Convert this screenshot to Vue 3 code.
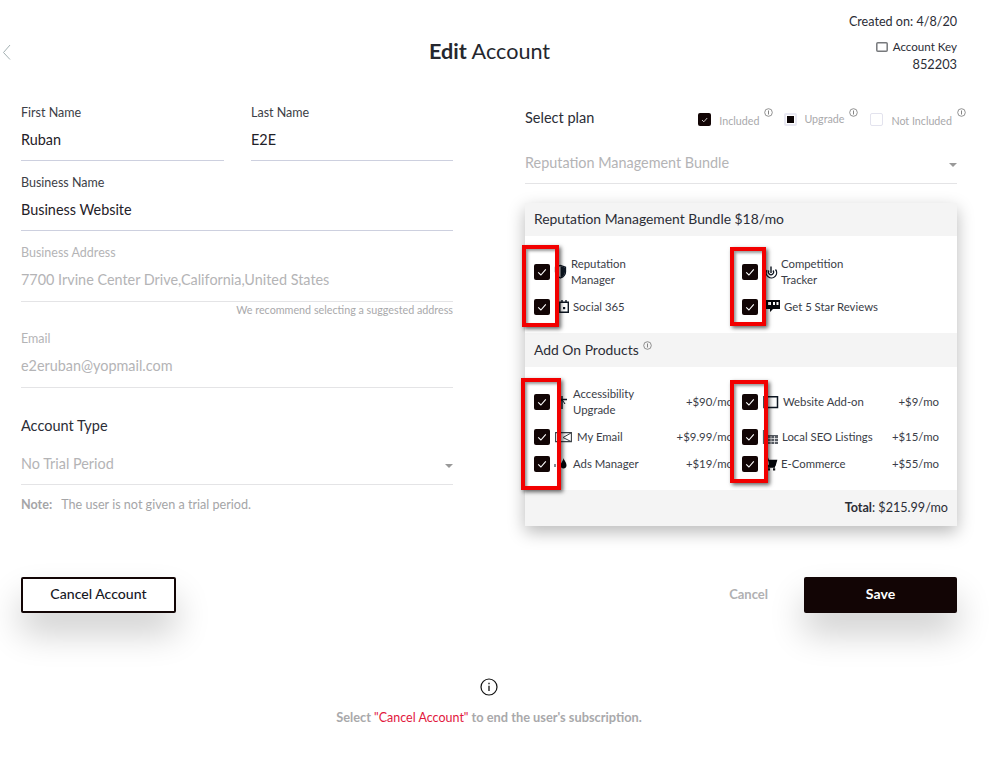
<script setup>
const dark = '#0d1622'
const grey = '#5a5f66'
const planItems = [
  { lines: ['Reputation', 'Manager'], w: 21, shapes: [
    { d: 'M5.5 5.2 10.5 3.5 15.5 5.2V10C15.5 13 13 15 10.5 16 8 15 5.5 13 5.5 10Z', stroke: dark, sw: 1.3 },
    { d: 'M10.5 4V15.5C13 14.5 15 12.8 15 10V5.5Z', fill: dark }
  ] },
  { lines: ['Competition', 'Tracker'], w: 23, shapes: [
    { d: 'M9 8A5.2 5.2 0 1 0 17.5 7.5', stroke: dark, sw: 1.3 },
    { d: 'M11 8.5A2.6 2.6 0 1 0 15 8.5', stroke: dark, sw: 1.2 },
    { d: 'M13 4.5V11', stroke: dark, sw: 1.4 }
  ] },
  { lines: ['Social 365'], w: 23, shapes: [
    { d: 'M9.8 5.2H18.3V15.3H9.8Z', stroke: dark, sw: 1.4 },
    { d: 'M12 3V6M16 3V6', stroke: dark, sw: 1.4 },
    { d: 'M13 10H15.2V12.2H13Z', fill: dark }
  ] },
  { lines: ['Get 5 Star Reviews'], w: 26, shapes: [
    { d: 'M8 3H22V12H15L12 15V12H8Z', fill: '#05070c' },
    { d: 'M10 5H13V8H10ZM15 5H17V8H15ZM18.5 5H20.5V8H18.5Z', fill: '#fff' }
  ] }
]
const addItems = [
  { lines: ['Accessibility', 'Upgrade'], price: '+$90/mo', w: 23, shapes: [
    { d: 'M12 4V17M7 7.5H17', stroke: dark, sw: 1.4 },
    { d: 'M12 7.5 9 12M12 7.5 15 12', stroke: dark, sw: 1 }
  ] },
  { lines: ['Website Add-on'], price: '+$9/mo', w: 25, shapes: [
    { d: 'M6 4.7H19.5V15.5H6Z', stroke: dark, sw: 1.5 }
  ] },
  { lines: ['My Email'], price: '+$9.99/mo', w: 27, shapes: [
    { d: 'M5.6 5.6H21.4V14.6H5.6Z', stroke: '#3a3f45', sw: 1.1 },
    { d: 'M21 6 13 10.5 21 14.5', stroke: '#3a3f45', sw: 1 }
  ] },
  { lines: ['Local SEO Listings'], price: '+$15/mo', w: 24, shapes: [
    { d: 'M5.5 3V17', stroke: grey, sw: 1.2 },
    { d: 'M10 8H20V17H10Z', fill: grey },
    { d: 'M13 9V17M16.5 9V17M10 11.5H20M10 14.5H20', stroke: '#fff', sw: 0.7 }
  ] },
  { lines: ['Ads Manager'], price: '+$19/mo', w: 23, shapes: [
    { d: 'M13.5 4C14 6.5 16.5 8 16.5 11.5 16.5 13.5 15 14.5 13.5 14.5 12 14.5 10.5 13.5 10.5 11.5 10.5 9 13 7.5 13.5 4Z', fill: '#05070c' },
    { d: 'M5 10V13M7.5 9V14', stroke: dark, sw: 1 }
  ] },
  { lines: ['E-Commerce'], price: '+$55/mo', w: 23, shapes: [
    { d: 'M7 4H9.5L10.5 6.5H18.5L17 11.5H10.5L9.5 13H17', stroke: '#05070c', sw: 1.3 },
    { d: 'M10.5 6.5H18.5L17 11.5H11Z', fill: '#05070c' },
    { d: 'M9.8 14.2H12V16.4H9.8ZM15 14.2H17.2V16.4H15Z', fill: '#05070c' }
  ] }
]
</script>

<template>
  <div class="page">
    <header class="top">
      <div class="back">
        <svg width="10" height="18" viewBox="0 0 10 18"><path d="M8 2 1.5 9.5 8 16.5" fill="none" stroke="#a3b0b2" stroke-width="1" /></svg>
      </div>
      <h1 class="title"><b>Edit</b> Account</h1>
      <div class="meta">
        <div class="created">Created on: 4/8/20</div>
        <div class="key">
          <svg width="12" height="10" viewBox="0 0 12 10"><rect x="0.8" y="0.8" width="10.4" height="8.4" rx="1" fill="none" stroke="#77797c" stroke-width="1.5" /></svg>
          <span>Account Key</span>
        </div>
        <div class="keynum">852203</div>
      </div>
    </header>

    <main class="columns">
      <section class="left">
        <div class="names">
          <div class="field">
            <label>First Name</label>
            <div class="value">Ruban</div>
          </div>
          <div class="field">
            <label>Last Name</label>
            <div class="value">E2E</div>
          </div>
        </div>
        <div class="field">
          <label>Business Name</label>
          <div class="value">Business Website</div>
        </div>
        <div class="field off address">
          <label>Business Address</label>
          <div class="value">7700 Irvine Center Drive,California,United States</div>
        </div>
        <div class="hint">We recommend selecting a suggested address</div>
        <div class="field off email">
          <label>Email</label>
          <div class="value">e2eruban@yopmail.com</div>
        </div>
        <div class="type-title">Account Type</div>
        <div class="select type-select">
          <span>No Trial Period</span>
          <i class="caret"></i>
        </div>
        <div class="note"><b>Note:</b><span>The user is not given a trial period.</span></div>
      </section>

      <section class="right">
        <div class="plan-row">
          <div class="plan-label">Select plan</div>
          <div class="legend">
            <div class="lg lg-inc">
              <span class="box small">
                <svg width="13" height="13" viewBox="0 0 13 13"><path d="M4 7 5.8 8.8 9.2 5" fill="none" stroke="#ddd" stroke-width="0.9" /></svg>
              </span>
              <span class="lg-text">Included</span>
              <svg class="inf" width="9" height="9" viewBox="0 0 9 9"><circle cx="4.5" cy="4.5" r="3.8" fill="none" stroke="#777" stroke-width="0.8" /><path d="M4.5 2.5V6.5" stroke="#777" stroke-width="0.9" /></svg>
            </div>
            <div class="lg lg-up">
              <span class="box-up"><i></i></span>
              <span class="lg-text">Upgrade</span>
              <svg class="inf" width="9" height="9" viewBox="0 0 9 9"><circle cx="4.5" cy="4.5" r="3.8" fill="none" stroke="#777" stroke-width="0.8" /><path d="M4.5 2.5V6.5" stroke="#777" stroke-width="0.9" /></svg>
            </div>
            <div class="lg lg-no">
              <span class="box-no"></span>
              <span class="lg-text">Not Included</span>
              <svg class="inf" width="9" height="9" viewBox="0 0 9 9"><circle cx="4.5" cy="4.5" r="3.8" fill="none" stroke="#777" stroke-width="0.8" /><path d="M4.5 2.5V6.5" stroke="#777" stroke-width="0.9" /></svg>
            </div>
          </div>
        </div>
        <div class="select plan-select">
          <span>Reputation Management Bundle</span>
          <i class="caret"></i>
        </div>

        <div class="card">
          <div class="card-head">Reputation Management Bundle $18/mo</div>
          <div class="grid">
            <div v-for="item in planItems" :key="item.lines[0]" class="row">
              <span class="box">
                <svg width="16" height="16" viewBox="0 0 16 16"><path d="M4.2 8.4 6.9 11 11.8 5.4" fill="none" stroke="#fff" stroke-width="1.1" /></svg>
              </span>
              <svg class="ic" :width="item.w" height="20" :viewBox="`0 0 ${item.w} 20`">
                <path v-for="s in item.shapes" :key="s.d" :d="s.d" :fill="s.fill || 'none'" :stroke="s.stroke || 'none'" :stroke-width="s.sw || 0" />
              </svg>
              <div class="name"><div v-for="l in item.lines" :key="l">{{ l }}</div></div>
            </div>
          </div>
          <div class="card-head addon">
            <span>Add On Products</span>
            <svg width="9" height="9" viewBox="0 0 9 9"><circle cx="4.5" cy="4.5" r="3.8" fill="none" stroke="#777" stroke-width="0.8" /><path d="M4.5 2.5V6.5" stroke="#777" stroke-width="0.9" /></svg>
          </div>
          <div class="grid">
            <div v-for="item in addItems" :key="item.lines[0]" class="row">
              <span class="box">
                <svg width="16" height="16" viewBox="0 0 16 16"><path d="M4.2 8.4 6.9 11 11.8 5.4" fill="none" stroke="#fff" stroke-width="1.1" /></svg>
              </span>
              <svg class="ic" :width="item.w" height="20" :viewBox="`0 0 ${item.w} 20`">
                <path v-for="s in item.shapes" :key="s.d" :d="s.d" :fill="s.fill || 'none'" :stroke="s.stroke || 'none'" :stroke-width="s.sw || 0" />
              </svg>
              <div class="name"><div v-for="l in item.lines" :key="l">{{ l }}</div></div>
              <div class="price">{{ item.price }}</div>
            </div>
          </div>
          <div class="card-total"><b>Total</b>: $215.99/mo</div>

          <i class="frame f1"></i>
          <i class="frame f2"></i>
          <i class="frame f3"></i>
          <i class="frame f4"></i>
        </div>
      </section>
    </main>

    <div class="actions">
      <button class="btn outline">Cancel Account</button>
      <div class="actions-right">
        <span class="link">Cancel</span>
        <button class="btn solid">Save</button>
      </div>
    </div>

    <footer class="foot">
      <svg width="18" height="18" viewBox="0 0 18 18"><circle cx="9" cy="9" r="8" fill="none" stroke="#111" stroke-width="1.2" /><path d="M9 7.8V13" stroke="#111" stroke-width="1.3" /><path d="M9 4.8V6.2" stroke="#111" stroke-width="1.3" /></svg>
      <p>Select <span>"Cancel Account"</span> to end the user's subscription.</p>
    </footer>
  </div>
</template>

<style>
html, body { margin: 0; background: #fff; }
</style>

<style scoped>
.page {
  width: 1005px;
  font-family: Lato, "Open Sans", sans-serif;
  color: #2b2d36;
  box-sizing: border-box;
}
.top {
  height: 104px;
  display: grid;
  grid-template-columns: 427px auto 1fr;
  padding: 0 48px 0 2px;
  box-sizing: border-box;
}
.back { padding-top: 43px; }
.back svg { display: block; }
.title {
  margin: 36px 0 0;
  font-size: 21.6px;
  line-height: 30px;
  font-weight: 400;
  color: #25272e;
}
.title b { font-weight: 700; }
.meta { text-align: right; padding-top: 14px; }
.created { font-size: 12.6px; line-height: 16px; }
.key {
  margin-top: 9px;
  font-size: 11.6px;
  line-height: 16px;
  display: flex;
  justify-content: flex-end;
  align-items: center;
  gap: 5px;
}
.keynum { font-size: 12.8px; line-height: 18px; }

.columns {
  display: grid;
  grid-template-columns: 432px 432px;
  column-gap: 72px;
  padding-left: 21px;
}
.left { padding-top: 1px; }
.names {
  display: grid;
  grid-template-columns: 203px 202px;
  column-gap: 27px;
}
.field { margin-bottom: 14px; border-bottom: 1px solid #cdd0df; padding-bottom: 10px; }
.field label {
  display: block;
  font-size: 12.5px;
  line-height: 16px;
  margin-bottom: 9px;
  color: #3c3e46;
}
.value { font-size: 14.4px; line-height: 20px; color: #1f2128; }
.off { border-bottom-color: #e4e4e6; }
.off label, .off .value { color: #b4b4b6; }
.address { padding-bottom: 11px; margin-bottom: 0; }
.hint {
  font-size: 10.75px;
  line-height: 16px;
  text-align: right;
  color: #a9a9ab;
  margin-bottom: 13px;
}
.email { margin-bottom: 0; padding-bottom: 11px; }
.type-title {
  margin-top: 28px;
  font-size: 14.5px;
  line-height: 20px;
}
.select {
  display: flex;
  justify-content: space-between;
  align-items: center;
  font-size: 14.4px;
  line-height: 20px;
  color: #b4b4b6;
  padding-bottom: 10px;
  border-bottom: 1px solid #e4e4e6;
}
.type-select { margin-top: 18px; }
.caret {
  width: 0;
  height: 0;
  border-left: 4.5px solid transparent;
  border-right: 4.5px solid transparent;
  border-top: 4.5px solid #999;
  margin-top: 3px;
}
.note {
  margin-top: 11px;
  display: flex;
  gap: 9px;
  font-size: 12.6px;
  line-height: 18px;
  color: #a5a5a7;
}
.plan-row {
  height: 26px;
  display: flex;
  justify-content: space-between;
  align-items: center;
}
.plan-label { font-size: 14.5px; line-height: 26px; margin-top: 1px; }
.legend {
  display: flex;
  margin-right: -9px;
  height: 26px;
  font-size: 10.7px;
  color: #a9a9ab;
}
.lg { position: relative; display: flex; align-items: center; height: 26px; }
.lg-inc { margin-right: 11px; }
.lg-up { margin-right: 12px; }
.lg-text { margin-left: 8px; margin-top: 7px; }
.lg-up .lg-text { margin-left: 7px; margin-top: 2px; }
.lg .inf { margin-left: 5px; margin-top: -10px; align-self: center; }
.lg-inc .box, .lg .box-up, .lg .box-no { margin-top: 4px; }
.box.small { width: 13px; height: 13px; }
.box-up {
  width: 13px;
  height: 13px;
  box-sizing: border-box;
  border: 2px solid #e8e8f2;
  border-radius: 2px;
  display: flex;
  align-items: center;
  justify-content: center;
}
.box-up i { width: 7px; height: 7px; background: #0b0405; flex: none; }
.box-no {
  width: 13px;
  height: 13px;
  box-sizing: border-box;
  border: 1px solid #e3e3ee;
  border-radius: 2px;
}
.plan-select { margin-top: 23px; }

.card {
  position: relative;
  margin-top: 19px;
  box-shadow: 0 6px 16px rgba(0, 0, 0, 0.28);
  background: #fff;
}
.card-head {
  height: 33px;
  line-height: 32px;
  background: #f4f4f4;
  padding-left: 9px;
  font-size: 13.9px;
}
.addon {
  height: 34px;
  display: flex;
  align-items: flex-start;
  gap: 4px;
  line-height: 34px;
}
.addon svg { margin-top: 8px; }
.grid {
  display: grid;
  grid-template-columns: 199px 197px;
  column-gap: 9px;
  row-gap: 11px;
  padding: 20px 0 18px 9px;
}
.addon + .grid { padding-top: 19px; }
.row {
  display: flex;
  align-items: center;
  min-height: 16px;
}
.box {
  width: 16px;
  height: 16px;
  flex: none;
  background: #120505;
  border-radius: 2px;
  display: block;
}
.box svg { display: block; }
.ic { flex: none; display: block; margin: -2px 0; }
.name { font-size: 11.35px; line-height: 16px; color: #3a3d47; }
.price { margin-left: auto; font-size: 11.4px; line-height: 16px; color: #3a3d47; }
.card-total {
  height: 36px;
  line-height: 35px;
  background: #f4f4f4;
  text-align: right;
  padding-right: 9px;
  font-size: 12.6px;
}
.frame {
  position: absolute;
  box-sizing: border-box;
  border: 4px solid #f20000;
  box-shadow: 2px 2px 4px rgba(0, 0, 0, 0.6), inset 2px 2px 3px rgba(0, 0, 0, 0.4);
}
.f1 { left: -3px; top: 42px; width: 37px; height: 82px; }
.f2 { left: 205px; top: 44px; width: 36px; height: 79px; }
.f3 { left: -4px; top: 175px; width: 40px; height: 112px; }
.f4 { left: 205px; top: 177px; width: 38px; height: 103px; }

.actions {
  margin-top: 51px;
  padding: 0 48px 0 21px;
  display: flex;
  justify-content: space-between;
  align-items: center;
}
.actions-right { display: flex; align-items: center; gap: 36px; }
.btn {
  height: 36px;
  font-family: inherit;
  font-size: 14.1px;
  border-radius: 2px;
  box-shadow: 0 20px 35px rgba(0, 0, 0, 0.2);
  cursor: pointer;
  padding: 0 0 3px;
}
.outline {
  width: 155px;
  background: #fff;
  border: 2px solid #120505;
  color: #16181f;
  font-weight: 500;
}
.solid {
  width: 153px;
  background: #120505;
  border: 0;
  color: #fff;
  font-weight: 700;
}
.link { font-size: 13px; color: #b0b0b2; font-weight: 700; margin-top: -2px; }
.foot {
  margin-top: 65px;
  padding-right: 27px;
  display: flex;
  flex-direction: column;
  align-items: center;
}
.foot svg { display: block; }
.foot p {
  margin: 13px 0 0;
  font-size: 12.8px;
  line-height: 16px;
  font-weight: 700;
  color: #a9a9ab;
}
.foot span { font-size: 12.5px; font-weight: 400; color: #e2173d; }
</style>
